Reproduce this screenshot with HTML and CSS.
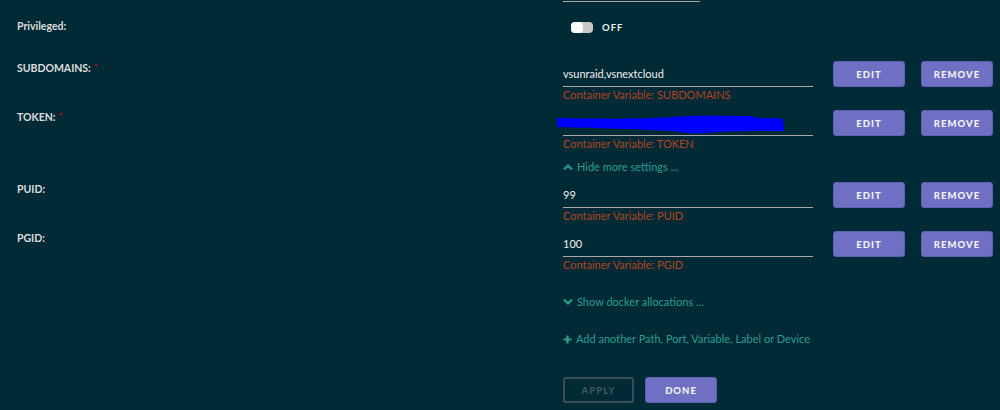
FILE: index.html
```html
<!DOCTYPE html>
<html lang="en">
<head>
    <meta charset="UTF-8">
    <title>Container Settings</title>
    <link rel="stylesheet" href="styles.css">
</head>
<body>
    <div class="settings">
        <div class="top-line"></div>

        <div class="row privileged">
            <div class="label">Privileged:</div>
            <div class="switch-wrap">
                <span class="switch"><span class="knob"></span></span>
                <span class="switch-text">OFF</span>
            </div>
        </div>

        <div class="row field">
            <div class="label">SUBDOMAINS: <span class="req">*</span></div>
            <div class="value-col">
                <div class="value">vsunraid,vsnextcloud</div>
                <div class="caption">Container Variable: SUBDOMAINS</div>
            </div>
            <button class="btn">EDIT</button>
            <button class="btn">REMOVE</button>
        </div>

        <div class="row field">
            <div class="label">TOKEN: <span class="req">*</span></div>
            <div class="value-col">
                <div class="value redacted">
                    <svg class="scribble" width="228" height="22" viewBox="0 0 228 22">
                        <path d="M0,4 C40,5 90,5 115,3 C140,1 170,2 195,2 L200,4 C210,4 222,4 226,5 L227,17 C200,17 180,17 160,18 C145,20 130,20 115,17 C80,15 40,14 0,13 Z" fill="#0000ff"/>
                    </svg>
                </div>
                <div class="caption">Container Variable: TOKEN</div>
            </div>
            <button class="btn">EDIT</button>
            <button class="btn">REMOVE</button>
        </div>

        <div class="row link-row tight">
            <a class="link"><svg width="10" height="8" viewBox="0 0 10 8"><path d="M1,6.5 L5,2.5 L9,6.5" fill="none" stroke="currentColor" stroke-width="2.2"/></svg>Hide more settings ...</a>
        </div>

        <div class="row field">
            <div class="label">PUID:</div>
            <div class="value-col">
                <div class="value">99</div>
                <div class="caption">Container Variable: PUID</div>
            </div>
            <button class="btn">EDIT</button>
            <button class="btn">REMOVE</button>
        </div>

        <div class="row field">
            <div class="label">PGID:</div>
            <div class="value-col">
                <div class="value">100</div>
                <div class="caption">Container Variable: PGID</div>
            </div>
            <button class="btn">EDIT</button>
            <button class="btn">REMOVE</button>
        </div>

        <div class="row link-row wide">
            <a class="link"><svg width="10" height="8" viewBox="0 0 10 8"><path d="M1,1.5 L5,5.5 L9,1.5" fill="none" stroke="currentColor" stroke-width="2.2"/></svg>Show docker allocations ...</a>
        </div>

        <div class="row link-row wide">
            <a class="link"><svg width="9" height="9" viewBox="0 0 9 9"><path d="M4.5,0.5 V8.5 M0.5,4.5 H8.5" fill="none" stroke="currentColor" stroke-width="2.2"/></svg>Add another Path, Port, Variable, Label or Device</a>
        </div>

        <div class="row actions">
            <button class="btn btn-outline">APPLY</button>
            <button class="btn">DONE</button>
        </div>
    </div>
</body>
</html>
```

FILE: styles.css
```css
:root {
    --bg: #012a37;
    --label: #dcdcdc;
    --value: #eeeeee;
    --caption: #b2441c;
    --link: #2a9d8f;
    --btn: #6f70c3;
    --line: #a8a8a8;
}

body {
    margin: 0;
    background-color: var(--bg);
    font-family: 'Lato', 'Open Sans', sans-serif;
    font-size: 11px;
    color: var(--label);
    width: 1000px;
    height: 410px;
    overflow: hidden;
}

.settings {
    display: flex;
    flex-direction: column;
}

.top-line {
    margin-left: 563px;
    width: 137px;
    margin-top: 1px;
    border-top: 1px solid var(--line);
}

.row {
    display: flex;
    align-items: flex-start;
}

.row > * {
    flex-shrink: 0;
}

.label {
    width: 546px;
    padding-left: 17px;
    line-height: 14px;
    font-size: 10.5px;
    font-weight: 700;
    color: var(--label);
}

.req {
    color: #a01010;
}

.privileged {
    margin-top: 17px;
    height: 42px;
}

.switch-wrap {
    display: flex;
    align-items: center;
    gap: 9px;
    margin-left: 8px;
    height: 16px;
}

.switch {
    width: 22px;
    height: 11px;
    border-radius: 4px;
    background-color: #c8c8c8;
    display: flex;
    align-items: center;
}

.knob {
    width: 12px;
    height: 11px;
    border-radius: 4px;
    background-color: #ffffff;
}

.switch-text {
    font-size: 9.5px;
    font-weight: 700;
    letter-spacing: 1px;
    color: var(--value);
}

.field {
    margin-bottom: 7px;
}

.value-col {
    width: 250px;
    margin-right: 20px;
}

.value {
    height: 25px;
    line-height: 25px;
    border-bottom: 1px solid var(--line);
    color: var(--value);
    position: relative;
}

.scribble {
    position: absolute;
    left: -6px;
    top: 4px;
}

.caption {
    line-height: 16px;
    color: var(--caption);
}

.btn {
    width: 72px;
    height: 26px;
    margin-right: 16px;
    border: 1px solid #5f60b0;
    border-radius: 3px;
    background-color: var(--btn);
    color: #f2f2f2;
    font-family: 'Lato', 'Open Sans', sans-serif;
    font-size: 9.5px;
    font-weight: 900;
    letter-spacing: 1px;
    padding: 0;
}

.btn-outline {
    background-color: transparent;
    border: 2px solid #3b4e55;
    color: #3f5860;
    margin-right: 11px;
    width: 71px;
}

.link-row {
    padding-left: 563px;
    line-height: 16px;
}

.tight {
    margin-bottom: 7px;
}

.wide {
    margin-top: 14px;
    margin-bottom: 7px;
}

.link {
    color: var(--link);
    display: flex;
    align-items: center;
    gap: 4px;
}

.actions {
    padding-left: 563px;
    margin-top: 23px;
}
```
